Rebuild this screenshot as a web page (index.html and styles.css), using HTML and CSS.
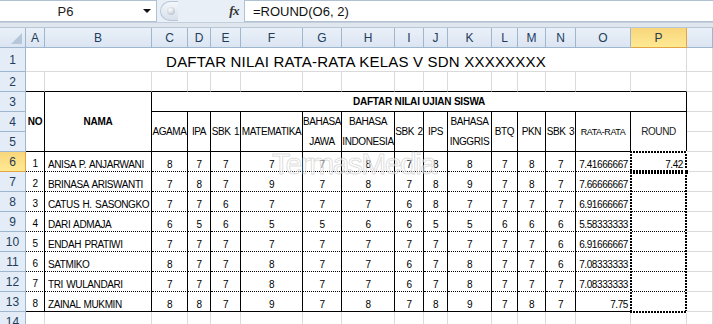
FILE: index.html
```html
<!DOCTYPE html>
<html>
<head>
<meta charset="utf-8">
<link rel="stylesheet" href="styles.css">
</head>
<body>
<div class="fbar">
  <div class="namebox"><span class="nb-text">P6</span><span class="dd"></span></div>
  <div class="fxarea"><span class="knob"><span class="dot"></span></span><span class="fx">fx</span></div>
  <div class="formula">=ROUND(O6, 2)</div>
</div>
<div class="strip"></div>
<div class="sheet">
  <!-- column headers -->
  <div class="ch corner"><span class="tri"></span></div>
  <div class="ch">A</div><div class="ch">B</div><div class="ch">C</div><div class="ch">D</div><div class="ch">E</div><div class="ch">F</div><div class="ch">G</div><div class="ch">H</div><div class="ch">I</div><div class="ch">J</div><div class="ch">K</div><div class="ch">L</div><div class="ch">M</div><div class="ch">N</div><div class="ch">O</div><div class="ch sel">P</div><div class="ch"></div>

  <!-- row 1 -->
  <div class="rh">1</div>
  <div class="c title">DAFTAR NILAI RATA-RATA KELAS V SDN XXXXXXXX</div>
  <div class="c"></div>

  <!-- row 2 -->
  <div class="rh">2</div>
  <div class="c b"></div><div class="c b"></div><div class="c b"></div><div class="c b"></div><div class="c b"></div><div class="c b"></div><div class="c b"></div><div class="c b"></div><div class="c b"></div><div class="c b"></div><div class="c b"></div><div class="c b"></div><div class="c b"></div><div class="c b"></div><div class="c b"></div><div class="c b"></div>
  <div class="c"></div>

  <!-- row 3 -->
  <div class="rh">3</div>
  <div class="c t b hd bold rs3 first">NO</div>
  <div class="c t b hd bold rs3">NAMA</div>
  <div class="c t b hd bold cs14">DAFTAR NILAI UJIAN SISWA</div>
  <div class="c"></div>

  <!-- row 4 -->
  <div class="rh">4</div>
  <div class="c t b hd rs2">AGAMA</div>
  <div class="c t b hd rs2">IPA</div>
  <div class="c t b hd rs2">SBK 1</div>
  <div class="c t b hd rs2">MATEMATIKA</div>
  <div class="c t b hd rs2 two">BAHASA<br>JAWA</div>
  <div class="c t b hd rs2 two">BAHASA<br>INDONESIA</div>
  <div class="c t b hd rs2">SBK 2</div>
  <div class="c t b hd rs2">IPS</div>
  <div class="c t b hd rs2 two">BAHASA<br>INGGRIS</div>
  <div class="c t b hd rs2">BTQ</div>
  <div class="c t b hd rs2">PKN</div>
  <div class="c t b hd rs2">SBK 3</div>
  <div class="c t b hd rs2 small">RATA-RATA</div>
  <div class="c t b hd rs2 round">ROUND</div>
  <div class="c"></div>

  <!-- row 5 -->
  <div class="rh">5</div>
  <div class="c"></div>

  <!-- row 6 -->
  <div class="rh sel">6</div>
  <div class="c t d no first">1</div><div class="c t d l">ANISA P. ANJARWANI</div>
  <div class="c t d">8</div><div class="c t d">7</div><div class="c t d">7</div><div class="c t d">7</div><div class="c t d">7</div><div class="c t d">8</div><div class="c t d">7</div><div class="c t d">8</div><div class="c t d">8</div><div class="c t d">7</div><div class="c t d">8</div><div class="c t d">7</div>
  <div class="c t d r">7.41666667</div>
  <div class="c t d r pc">7.42<span class="ants"></span><span class="handle"></span></div>
  <div class="c"></div>

  <!-- row 7 -->
  <div class="rh">7</div>
  <div class="c t d no first">2</div><div class="c t d l">BRINASA ARISWANTI</div>
  <div class="c t d">7</div><div class="c t d">8</div><div class="c t d">7</div><div class="c t d">9</div><div class="c t d">7</div><div class="c t d">8</div><div class="c t d">7</div><div class="c t d">8</div><div class="c t d">9</div><div class="c t d">7</div><div class="c t d">8</div><div class="c t d">7</div>
  <div class="c t d r">7.66666667</div>
  <div class="c t d pc"><span class="ants range"></span></div>
  <div class="c"></div>

  <!-- row 8 -->
  <div class="rh">8</div>
  <div class="c t d no first">3</div><div class="c t d l">CATUS H. SASONGKO</div>
  <div class="c t d">7</div><div class="c t d">7</div><div class="c t d">6</div><div class="c t d">7</div><div class="c t d">7</div><div class="c t d">7</div><div class="c t d">6</div><div class="c t d">8</div><div class="c t d">7</div><div class="c t d">7</div><div class="c t d">7</div><div class="c t d">7</div>
  <div class="c t d r">6.91666667</div>
  <div class="c t d"></div>
  <div class="c"></div>

  <!-- row 9 -->
  <div class="rh">9</div>
  <div class="c t d no first">4</div><div class="c t d l">DARI ADMAJA</div>
  <div class="c t d">6</div><div class="c t d">5</div><div class="c t d">6</div><div class="c t d">5</div><div class="c t d">5</div><div class="c t d">6</div><div class="c t d">6</div><div class="c t d">5</div><div class="c t d">5</div><div class="c t d">6</div><div class="c t d">6</div><div class="c t d">6</div>
  <div class="c t d r">5.58333333</div>
  <div class="c t d"></div>
  <div class="c"></div>

  <!-- row 10 -->
  <div class="rh">10</div>
  <div class="c t d no first">5</div><div class="c t d l">ENDAH PRATIWI</div>
  <div class="c t d">7</div><div class="c t d">7</div><div class="c t d">7</div><div class="c t d">7</div><div class="c t d">7</div><div class="c t d">7</div><div class="c t d">7</div><div class="c t d">7</div><div class="c t d">7</div><div class="c t d">7</div><div class="c t d">7</div><div class="c t d">6</div>
  <div class="c t d r">6.91666667</div>
  <div class="c t d"></div>
  <div class="c"></div>

  <!-- row 11 -->
  <div class="rh">11</div>
  <div class="c t d no first">6</div><div class="c t d l">SATMIKO</div>
  <div class="c t d">8</div><div class="c t d">7</div><div class="c t d">7</div><div class="c t d">8</div><div class="c t d">7</div><div class="c t d">7</div><div class="c t d">6</div><div class="c t d">7</div><div class="c t d">8</div><div class="c t d">7</div><div class="c t d">7</div><div class="c t d">6</div>
  <div class="c t d r">7.08333333</div>
  <div class="c t d"></div>
  <div class="c"></div>

  <!-- row 12 -->
  <div class="rh">12</div>
  <div class="c t d no first">7</div><div class="c t d l">TRI WULANDARI</div>
  <div class="c t d">7</div><div class="c t d">7</div><div class="c t d">7</div><div class="c t d">8</div><div class="c t d">7</div><div class="c t d">7</div><div class="c t d">6</div><div class="c t d">7</div><div class="c t d">8</div><div class="c t d">7</div><div class="c t d">7</div><div class="c t d">7</div>
  <div class="c t d r">7.08333333</div>
  <div class="c t d"></div>
  <div class="c"></div>

  <!-- row 13 -->
  <div class="rh">13</div>
  <div class="c t b no first">8</div><div class="c t b l">ZAINAL MUKMIN</div>
  <div class="c t b">8</div><div class="c t b">8</div><div class="c t b">7</div><div class="c t b">9</div><div class="c t b">7</div><div class="c t b">8</div><div class="c t b">7</div><div class="c t b">8</div><div class="c t b">9</div><div class="c t b">7</div><div class="c t b">8</div><div class="c t b">7</div>
  <div class="c t b r">7.75</div>
  <div class="c t b"></div>
  <div class="c"></div>

  <!-- row 14 -->
  <div class="rh">14</div>
  <div class="c"></div><div class="c"></div><div class="c"></div><div class="c"></div><div class="c"></div><div class="c"></div><div class="c"></div><div class="c"></div><div class="c"></div><div class="c"></div><div class="c"></div><div class="c"></div><div class="c"></div><div class="c"></div><div class="c"></div><div class="c"></div>
  <div class="c"></div>

  <div class="watermark">TermasMedia</div>
</div>
</body>
</html>
```
FILE: styles.css
```css
* { box-sizing: border-box; margin: 0; padding: 0; }
html, body { width: 713px; height: 324px; overflow: hidden; background: #fff; }
body { font-family: "Liberation Sans", Arial, sans-serif; color: #000; }

/* formula bar */
.fbar { display: flex; height: 23px; background: #e9eff7; border-bottom: 1px solid #c3cfdd; }
.namebox { width: 157px; background: #fff; border: 1px solid #b1c1d4; border-left: none; display: flex; align-items: center; padding-right: 4px; }
.nb-text { flex: 1; text-align: center; font-size: 13px; color: #1b1b1b; padding-right: 12px; }
.dd { width: 0; height: 0; border-left: 4px solid transparent; border-right: 4px solid transparent; border-top: 4px solid #111; margin-right: 1px; }
.fxarea { width: 87px; display: flex; align-items: center; justify-content: space-between; padding: 0 5px 0 3px; }
.knob { width: 18px; height: 20px; border-radius: 10px 0 0 10px; border: 1px solid #b8c5d5; border-right: none; background: linear-gradient(#f4f7fb, #d7e0eb); display: flex; align-items: center; justify-content: center; }
.dot { width: 8px; height: 8px; border-radius: 50%; background: radial-gradient(circle at 40% 35%, #fdfdfd, #aab4c0); margin-left: 2px; }
.fx { font-family: "Liberation Serif", serif; font-style: italic; font-weight: bold; font-size: 13px; color: #333; letter-spacing: -0.5px; }
.formula { flex: 1; background: #fff; border: 1px solid #b1c1d4; border-right: none; padding-left: 8px; font-size: 13px; line-height: 21px; color: #111; }
.strip { height: 5px; background: #dfe6ee; border-bottom: 1px solid #b9c6d5; }

/* sheet grid */
.sheet {
  position: relative;
  display: grid;
  grid-template-columns: 26px 19px 107px 36px 23px 30px 62px 39px 53px 29px 24px 44px 26px 28px 30px 55px 56px 26px;
  grid-template-rows: 20px 24px repeat(13, 20px);
}

.ch, .rh {
  background: #e4ecf7;
  border-right: 1px solid #9eb6ce;
  border-bottom: 1px solid #9eb6ce;
  color: #223c5c;
  font-size: 12px;
  display: flex;
  align-items: center;
  justify-content: center;
}
.ch { background: linear-gradient(#eaf0f8, #dbe5f2); }
.ch.sel, .rh.sel { background: linear-gradient(#f8d67c, #ffe993); border-color: #e2a542; color: #2a3a4c; }
.corner { position: relative; }
.tri { position: absolute; right: 3px; bottom: 3px; width: 0; height: 0; border-left: 11px solid transparent; border-bottom: 11px solid #b7c7da; }

.c {
  background: #fff;
  border-right: 1px solid #dadada;
  border-bottom: 1px solid #dadada;
  font-size: 10px;
  letter-spacing: -0.4px;
  word-spacing: 1px;
  line-height: 12px;
  display: flex;
  align-items: flex-end;
  justify-content: center;
  white-space: nowrap;
  overflow: hidden;
}
.t { border-right-color: #000; }
.b { border-bottom: 1px solid #000; }
.d { border-bottom: 1px dotted #000; }
.l { justify-content: flex-start; padding-left: 3px; }
.r { justify-content: flex-end; padding-right: 2px; }
.no { padding-bottom: 1px; }
.hd { align-items: center; text-align: center; }
.bold { font-weight: bold; letter-spacing: -0.2px; word-spacing: 0; }
.rs3 { grid-row: span 3; }
.rs2 { grid-row: span 2; }
.cs14 { grid-column: span 14; }
.two { line-height: 19.5px; }
.small { font-size: 9px; }
.round { font-size: 10px; color: #222; }

.title {
  grid-column: span 16;
  font-size: 15px;
  letter-spacing: 0.2px;
  word-spacing: 0;
  line-height: 18px;
  color: #000;
}

/* copy / selection marquee */
.pc { position: relative; overflow: visible; padding-right: 3px; }
.ants {
  position: absolute;
  left: -1px; right: -1px; top: -1px; bottom: -1px;
  z-index: 2;
  background:
    repeating-linear-gradient(90deg, #000 0 2px, #fff 2px 3px) left top / 100% 2px no-repeat,
    repeating-linear-gradient(90deg, #000 0 2px, #fff 2px 3px) left bottom / 100% 2px no-repeat,
    repeating-linear-gradient(180deg, #000 0 2px, #fff 2px 3px) left top / 2px 100% no-repeat,
    repeating-linear-gradient(180deg, #000 0 2px, #fff 2px 3px) right top / 2px 100% no-repeat;
}
.ants.range { top: 0; bottom: auto; height: 141px; }
.handle { position: absolute; right: -3px; bottom: -4px; width: 5px; height: 6px; background: #000; border: 1px solid #fff; z-index: 3; }

.watermark {
  position: absolute;
  left: 272px;
  top: 120px;
  font-size: 30px;
  line-height: 32px;
  letter-spacing: -1.5px;
  color: rgba(255, 255, 255, 0.55);
  -webkit-text-stroke: 1px rgba(170, 170, 170, 0.4);
  pointer-events: none;
  z-index: 1;
}
```
